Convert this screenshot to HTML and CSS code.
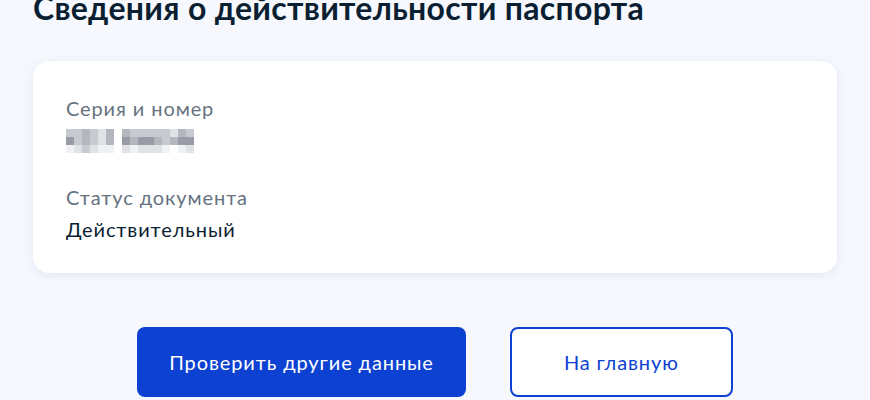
FILE: index.html
```html
<!DOCTYPE html>
<html lang="ru">
<head>
  <meta charset="UTF-8">
  <meta name="viewport" content="width=device-width, initial-scale=1.0">
  <title>Сведения о действительности паспорта</title>
  <link rel="stylesheet" href="styles.css">
</head>
<body>
  <main class="page">
    <h1 class="page-title">Сведения о действительности паспорта</h1>

    <!-- Result card -->
    <section class="card">
      <div class="field">
        <div class="field-label">Серия и номер</div>
        <div class="field-value mosaic" aria-label="скрыто">
          <span class="s3"></span><span class="s3"></span><span class="s4"></span><span class="s3"></span><span class="s2"></span><span class="s4"></span><span class="s0"></span><span class="s4"></span><span class="s3"></span><span class="s3"></span><span class="s3"></span><span class="s3"></span><span class="s3"></span><span class="s2"></span><span class="s4"></span><span class="s3"></span>
          <span class="s5"></span><span class="s3"></span><span class="s4"></span><span class="s3"></span><span class="s2"></span><span class="s4"></span><span class="s0"></span><span class="s5"></span><span class="s4"></span><span class="s5"></span><span class="s5"></span><span class="s4"></span><span class="s3"></span><span class="s4"></span><span class="s5"></span><span class="s5"></span>
          <span class="s1"></span><span class="s2"></span><span class="s3"></span><span class="s2"></span><span class="s1"></span><span class="s1"></span><span class="s0"></span><span class="s2"></span><span class="s1"></span><span class="s2"></span><span class="s2"></span><span class="s2"></span><span class="s1"></span><span class="s0"></span><span class="s1"></span><span class="s2"></span>
        </div>
      </div>
      <div class="field">
        <div class="field-label">Статус документа</div>
        <div class="field-value">Действительный</div>
      </div>
    </section>

    <div class="actions">
      <button class="btn btn-primary">Проверить другие данные</button>
      <button class="btn btn-secondary">На главную</button>
    </div>
  </main>
</body>
</html>
```

FILE: styles.css
```css
/* General */
body {
  margin: 0;
  padding: 0;
  background: #f6f8fd;
  font-family: Lato, "Noto Sans", sans-serif;
  color: #0b1f33;
}

.page {
  padding: 0 33px;
}

.page-title {
  margin: -12px 0 0;
  font-size: 32px;
  line-height: 40px;
  font-weight: 700;
  letter-spacing: 0.3px;
  color: #0b1f33;
}

/* Card */
.card {
  margin-top: 33px;
  background: #fff;
  border-radius: 16px;
  box-shadow: 0 2px 10px rgba(190, 200, 235, 0.35);
  padding: 33px 33px 30px;
  display: flex;
  flex-direction: column;
  gap: 33px;
}

.field-label {
  font-size: 20px;
  line-height: 28px;
  letter-spacing: 0.9px;
  color: #66727f;
}

.field-value {
  margin-top: 4px;
  font-size: 20px;
  line-height: 28px;
  letter-spacing: 0.9px;
  color: #0b1f33;
}

/* blurred number */
.mosaic {
  display: grid;
  grid-template-columns: repeat(16, 8px);
  grid-auto-rows: 8px;
  width: max-content;
  margin-top: 7px;
  margin-bottom: -3px;
}

.mosaic .s0 { background: transparent; }
.mosaic .s1 { background: #f0f1f3; }
.mosaic .s2 { background: #e0e2e6; }
.mosaic .s3 { background: #c7cad0; }
.mosaic .s4 { background: #b3b7be; }
.mosaic .s5 { background: #989ca6; }

/* Buttons */
.actions {
  display: flex;
  justify-content: center;
  gap: 44px;
  margin-top: 54px;
}

.btn {
  height: 70px;
  border-radius: 8px;
  font-family: Lato, "Noto Sans", sans-serif;
  font-size: 20px;
  letter-spacing: 0.9px;
  cursor: pointer;
}

.btn-primary {
  padding: 0 32px;
  background: #0d41d1;
  color: #fff;
  border: none;
}

.btn-secondary {
  min-width: 223px;
  padding: 0 32px;
  background: #fff;
  color: #0d41d1;
  border: 2px solid #0d41d1;
}
```
